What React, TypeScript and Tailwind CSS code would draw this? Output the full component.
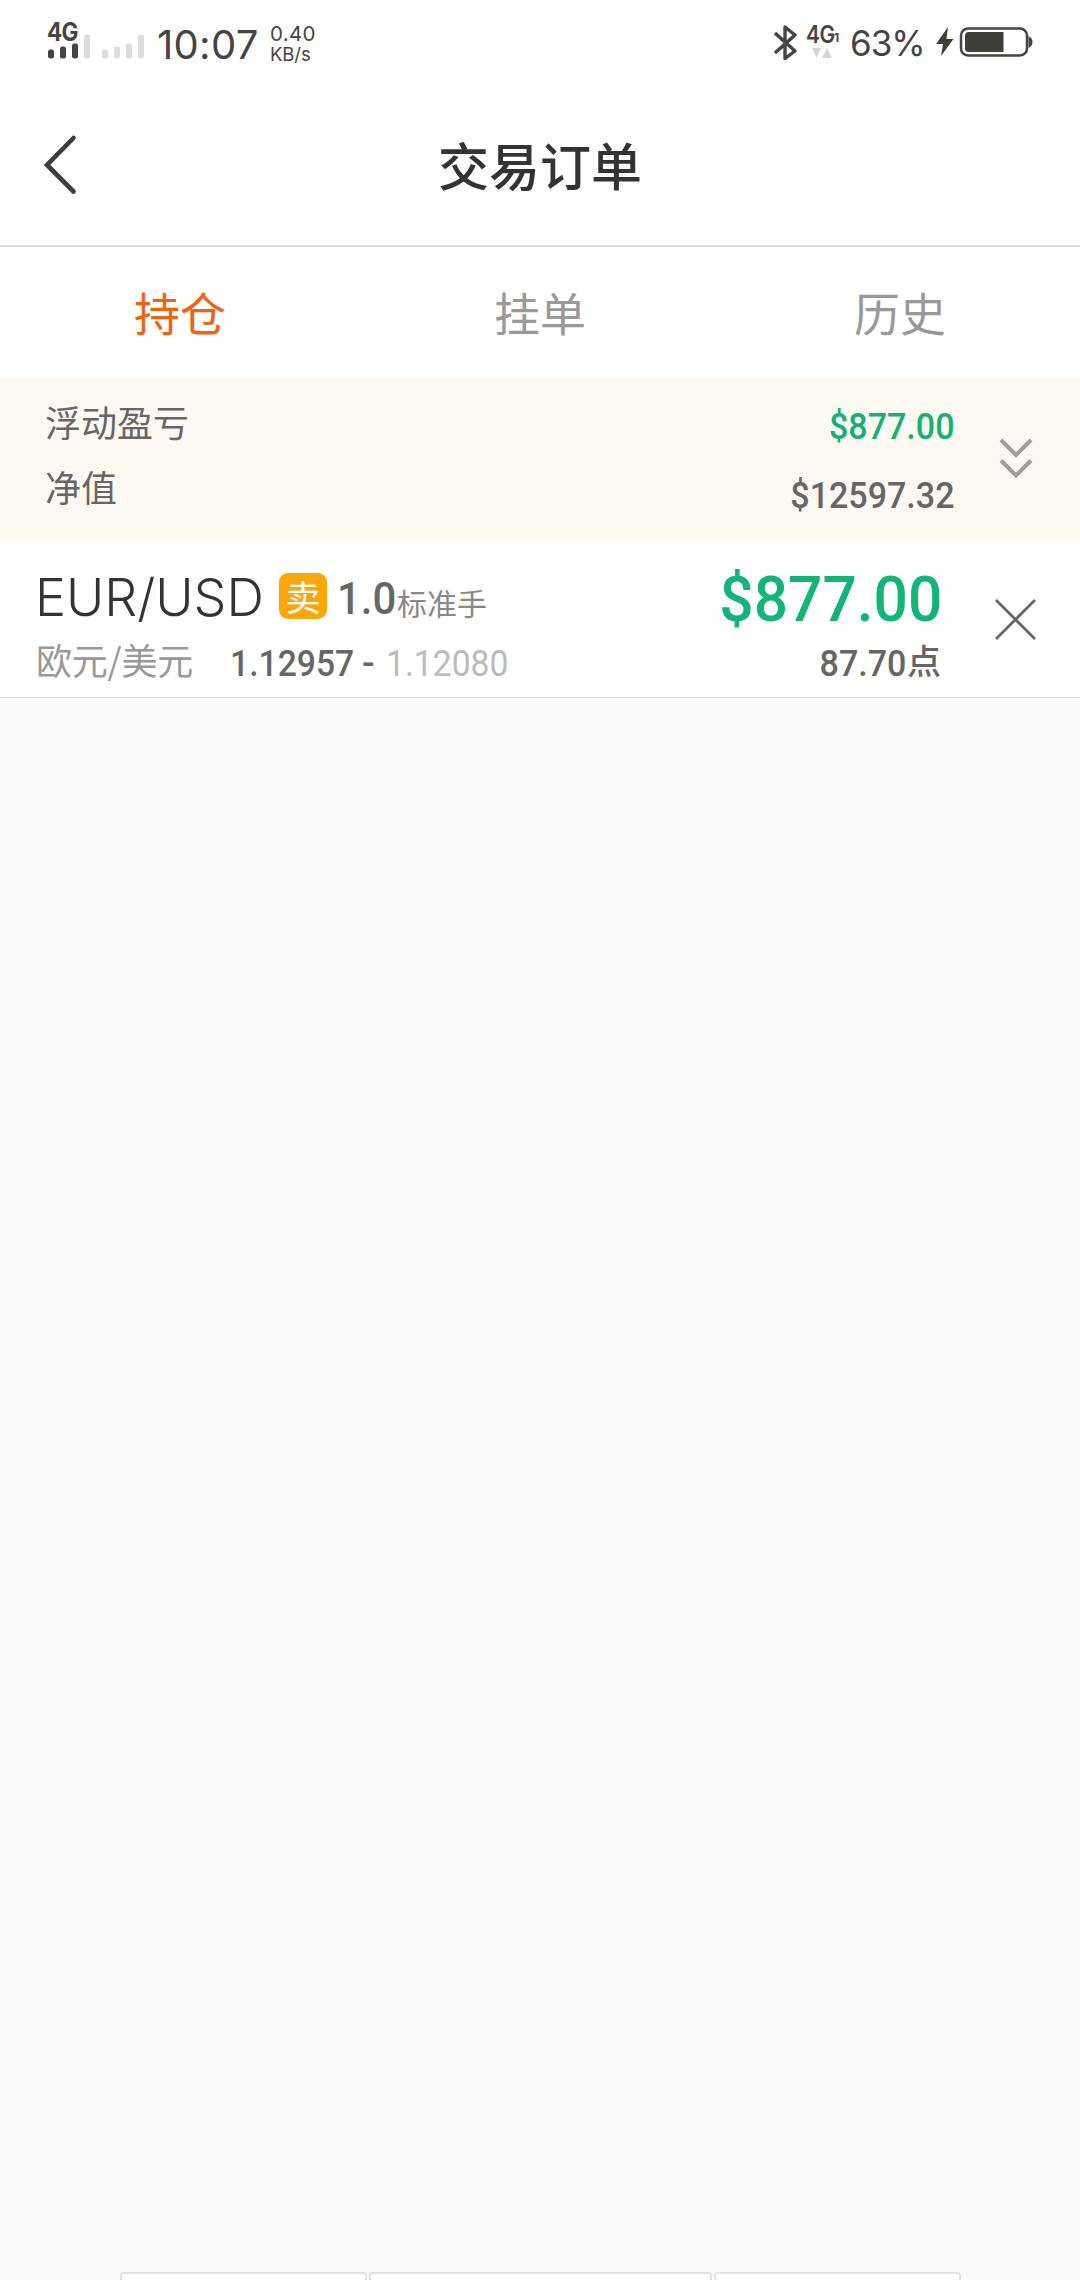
import React from 'react';

const bars = [
  { x: 0, h: 9, on: true },
  { x: 12, h: 12, on: true },
  { x: 24, h: 15, on: true },
  { x: 36, h: 24, on: false },
  { x: 54, h: 9, on: false },
  { x: 66, h: 12, on: false },
  { x: 78, h: 15, on: false },
  { x: 90, h: 24, on: false },
];

function StatusBar() {
  return (
    <div className="flex h-[80px] items-start font-['Inter',sans-serif] text-[#444444]">
      <div className="relative ml-[48px] mt-[22px] h-[37px] w-[98px]">
        <span className="absolute -left-px -top-[2px] origin-left scale-x-[.9] text-[25px] leading-[24px] font-bold tracking-[-0.8px]">4G</span>
        <svg className="absolute left-0 top-[12px]" width="98" height="25">
          {bars.map((b) => (
            <rect key={b.x} x={b.x} y={24.5 - b.h} width="6" height={b.h} rx="2.2" fill={b.on ? '#444' : '#dcdcdc'} />
          ))}
        </svg>
      </div>
      <span className="ml-[11px] mt-[20px] w-[101px] whitespace-nowrap text-[40px] leading-[49px] tracking-[0.3px]">10:07</span>
      <div className="ml-[12px] mt-[24px] flex flex-col text-[20.5px] leading-[20px]">
        <span className="tracking-[0.3px]">0.40</span>
        <span className="text-[18.5px] tracking-[-0.1px]">KB/s</span>
      </div>
      <svg className="ml-auto mt-[24px]" width="26" height="38" viewBox="0 0 26 38" fill="none" stroke="#444" strokeWidth="3.4">
        <path d="M1 9 L21 27 L11 34.500 V3 L21 11 L1 29" strokeLinejoin="round" />
      </svg>
      <div className="relative ml-[6px] mt-[24px] h-[40px] w-[34px]">
        <span className="absolute left-0 top-0 origin-left scale-x-[.87] text-[24px] leading-[22px] font-semibold tracking-[-0.5px]">4G</span>
        <span className="absolute left-[28px] top-[7px] text-[12px] leading-[14px] font-bold">1</span>
        <svg className="absolute left-[6px] top-[24px]" width="20" height="11" fill="#d4d4d4">
          <path d="M0 0H9L4.500 10zM10 10H20L15 0z" />
        </svg>
      </div>
      <span className="ml-[10px] mt-[19px] w-[74px] whitespace-nowrap text-[35px] leading-[48px] tracking-[-1px]">63%</span>
      <svg className="ml-[12px] mt-[26px] mr-[46px]" width="98" height="33" viewBox="0 0 98 33">
        <path d="M12 1 L0 18 H7 L5 30 L17.500 13 H10.500z" fill="#40403a" />
        <rect x="25" y="2.500" width="66" height="27" rx="7" fill="none" stroke="#444" strokeWidth="2.500" />
        <path d="M32.500 6H67.500V26H32.500a3.500 3.500 0 0 1-3.500-3.500V9.500A3.500 3.500 0 0 1 32.500 6z" fill="#40403a" />
        <path d="M92.500 10q4 2 4 6t-4 6z" fill="#444" />
      </svg>
    </div>
  );
}

export default function App() {
  return (
    <main className="flex h-[2280px] w-[1080px] flex-col overflow-hidden bg-[#fafafa] font-['Noto_Sans_CJK_SC',sans-serif]">
      <header className="flex h-[247px] shrink-0 flex-col border-b-2 border-[#dddddd] bg-white">
        <StatusBar />
        <div className="grid h-[165px] grid-cols-[100px_1fr_100px]">
          <svg className="ml-[41px] mt-[54px]" width="36" height="62" viewBox="0 0 36 62" fill="none" stroke="#3c3c3c" strokeWidth="4.600" strokeLinecap="round">
            <path d="M32.500 4 L6 31 L32.500 57.500" strokeLinejoin="miter" />
          </svg>
          <h1 className="mt-[48px] text-center text-[51px] leading-[72px] font-medium text-[#333333]">交易订单</h1>
        </div>
      </header>

      <nav className="grid h-[131px] shrink-0 grid-cols-3 bg-white pt-[32px] text-center text-[46px] leading-[64px] text-[#999999]">
        <span className="text-[#f1620f]">持仓</span>
        <span>挂单</span>
        <span>历史</span>
      </nav>

      <section className="flex h-[163px] shrink-0 bg-[#fef8f2] text-[#666666]">
        <div className="ml-[45px] mt-[11px] flex flex-col text-[36px] leading-[65px]">
          <span>浮动盈亏</span>
          <span>净值</span>
        </div>
        <div className="ml-auto mt-[14px] flex origin-right scale-x-[.92] flex-col text-right font-['Roboto',sans-serif] text-[37px] leading-[69px] font-medium">
          <span className="text-[#13b174]">$877.00</span>
          <span>$12597.32</span>
        </div>
        <svg className="ml-[43px] mt-[59px] mr-[46px]" width="36" height="42" viewBox="0 0 36 42" fill="none" stroke="#a09c9a" strokeWidth="4">
          <path d="M3 3 L18 18 L33 3M3 23.500 L18 38.500 L33 23.500" />
        </svg>
      </section>

      <section className="flex h-[157px] shrink-0 border-b border-[#e2e2e2] bg-white">
        <div className="ml-[36px] flex flex-col">
          <div className="flex h-[91px] items-start">
            <span className="-ml-px mt-[25px] w-[228px] whitespace-nowrap font-['Inter',sans-serif] text-[52px] leading-[63px] font-light text-[#333333]">EUR/USD</span>
            <span className="ml-[16px] mt-[32px] h-[46px] w-[48px] rounded-[9px] bg-[#fba70c] text-center text-[35px] leading-[46px] text-white">卖</span>
            <span className="ml-[10px] mt-[26px] w-[60px] origin-left scale-x-[.93] font-['Roboto',sans-serif] text-[45px] leading-[64px] font-medium text-[#666666]">1.0</span>
            <span className="mt-[40px] text-[30px] leading-[43px] text-[#888888]">标准手</span>
          </div>
          <div className="flex h-[60px] items-start whitespace-nowrap">
            <span className="-mt-px w-[194px] text-[36px] leading-[56px] tracking-[-0.2px] text-[#999999]">欧元/美元</span>
            <span className="mt-[4px] w-[132px] origin-left scale-x-[.91] font-['Roboto',sans-serif] text-[37px] leading-[56px] font-medium text-[#666666]">1.12957</span>
            <span className="mt-[4px] w-[24px] font-['Roboto',sans-serif] text-[37px] leading-[56px] font-medium text-[#666666]">-</span>
            <span className="mt-[4px] w-[132px] origin-left scale-x-[.91] font-['Roboto',sans-serif] text-[37px] leading-[56px] text-[#bbbbbb]">1.12080</span>
          </div>
        </div>
        <div className="ml-auto flex flex-col items-end">
          <span className="mt-[22px] h-[70px] origin-right scale-x-[.96] font-['Roboto',sans-serif] text-[63px] leading-[74px] font-medium text-[#12b577]">$877.00</span>
          <div className="mr-px flex items-start text-[#666666]">
            <span className="mt-[3px] origin-right scale-x-[.92] font-['Roboto',sans-serif] text-[37px] leading-[56px] font-medium">87.70</span>
            <span className="ml-px text-[34px] leading-[54px] font-medium">点</span>
          </div>
        </div>
        <svg className="ml-[53px] mt-[58px] mr-[44px]" width="41" height="41" viewBox="0 0 41 41" fill="none" stroke="#666" strokeWidth="2.800">
          <path d="M1 1 L40 40M40 1 L1 40" />
        </svg>
      </section>

      <footer className="mt-auto ml-[120px] grid h-[8px] w-[841px] shrink-0 grid-cols-[247px_343px_247px] gap-[2px] overflow-hidden">
        <div className="h-4 rounded-[4px] border-2 border-[#e2e2e2] bg-white" />
        <div className="h-4 rounded-[4px] border-2 border-[#e2e2e2] bg-white" />
        <div className="h-4 rounded-[4px] border-2 border-[#e2e2e2] bg-white" />
      </footer>
    </main>
  );
}
